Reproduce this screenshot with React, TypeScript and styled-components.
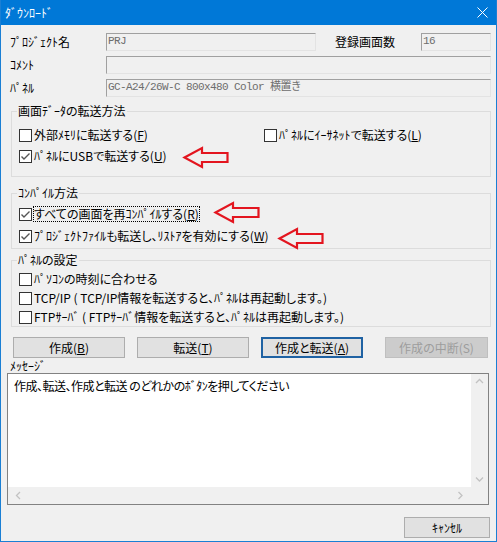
import React from "react";
import styled, { createGlobalStyle, css } from "styled-components";

const UI_FONT = `"Noto Sans CJK JP", "Noto Sans", sans-serif`;
const FIELD_FONT = `"Liberation Mono", "Noto Sans CJK JP", monospace`;

const GlobalStyle = createGlobalStyle`
  html, body { margin: 0; padding: 0; background: #f0f0f0; }
  body {
    font-family: ${UI_FONT};
    font-size: 12px;
    color: #000;
    font-feature-settings: "palt" 1;
  }
  * { box-sizing: border-box; }
`;

const Window = styled.div`
  position: relative;
  width: 497px;
  height: 542px;
  border: 1px solid #1a7fd4;
  border-top: none;
  background: #f0f0f0;
  display: flex;
  flex-direction: column;
  overflow: hidden;
`;

const TitleBar = styled.div`
  height: 25px;
  flex: none;
  background: #0078d7;
  color: #fff;
  display: flex;
  align-items: center;
  justify-content: space-between;
  padding: 0 8px 0 4px;
`;

const Title = styled.span`
  font-size: 12px;
  line-height: 14px;
`;

const Body = styled.div`
  display: flex;
  flex-direction: column;
  padding: 8px 5px 0 6px;
`;

const InfoRow = styled.div`
  display: flex;
  align-items: center;
  height: 18px;
  padding-left: 3px;
  & + & { margin-top: 5px; }
`;

const FieldLabel = styled.span<{ $w: number; $ml?: number }>`
  width: ${(p) => p.$w}px;
  margin-left: ${(p) => p.$ml ?? 0}px;
  flex: none;
  line-height: 14px;
  white-space: nowrap;
`;

const Field = styled.div<{ $w?: number }>`
  height: 18px;
  ${(p) => (p.$w ? css`width: ${p.$w}px; flex: none;` : css`flex: 1;`)}
  border: 1px solid;
  border-color: #a0a0a0 #e3e3e3 #e3e3e3 #a0a0a0;
  background: #f0f0f0;
  color: #6d6d6d;
  font-family: ${FIELD_FONT};
  font-size: 11px;
  letter-spacing: -0.6px;
  line-height: 14px;
  padding: 0 0 0 1px;
  white-space: nowrap;
  overflow: hidden;
  font-feature-settings: normal;
`;

const Group = styled.div<{ $mt: number; $pt: number; $pb: number }>`
  position: relative;
  margin: ${(p) => p.$mt}px 0 0 4px;
  border: 1px solid #dcdcdc;
  padding: ${(p) => p.$pt}px 0 ${(p) => p.$pb}px 7px;
`;

const GroupTitle = styled.span`
  position: absolute;
  top: -8px;
  left: 5px;
  padding: 0 1px;
  background: #f0f0f0;
  line-height: 14px;
  white-space: nowrap;
`;

const CheckGrid = styled.div`
  display: grid;
  grid-template-columns: 245px 1fr;
  grid-auto-rows: 20px;
  row-gap: 1px;
`;

const CheckList = styled.div<{ $gap: number }>`
  display: flex;
  flex-direction: column;
  gap: ${(p) => p.$gap}px;
`;

const CheckRow = styled.div<{ $h: number }>`
  display: flex;
  align-items: center;
  gap: 2px;
  height: ${(p) => p.$h}px;
`;

const Box = styled.span`
  width: 13px;
  height: 13px;
  flex: none;
  border: 1px solid #333;
  background: #fff;
  display: flex;
  align-items: center;
  justify-content: center;
`;

const CheckText = styled.span<{ $focus?: boolean }>`
  line-height: 14px;
  white-space: nowrap;
  ${(p) =>
    p.$focus &&
    css`
      outline: 1px dotted #000;
      outline-offset: 0;
    `}
`;

const Key = styled.span`
  text-decoration: underline;
  text-underline-offset: 1px;
`;

const ButtonRow = styled.div`
  display: flex;
  margin-top: 10px;
  padding-left: 6px;
`;

const Button = styled.div<{ $w: number; $ml?: number; $default?: boolean; $disabled?: boolean }>`
  width: ${(p) => p.$w}px;
  margin-left: ${(p) => p.$ml ?? 0}px;
  height: 21px;
  flex: none;
  display: flex;
  align-items: center;
  justify-content: center;
  background: #e1e1e1;
  border: 1px solid #adadad;
  line-height: 14px;
  white-space: nowrap;
  ${(p) =>
    p.$default &&
    css`
      border-color: #1f62a3;
      box-shadow: inset 0 0 0 1px #1f62a3;
    `}
  ${(p) =>
    p.$disabled &&
    css`
      background: #cccccc;
      border-color: #bfbfbf;
      color: #9d9d9d;
    `}
`;

const MessageLabel = styled.div`
  margin-top: 2px;
  padding-left: 3px;
  line-height: 12px;
  height: 12px;
`;

const MessageBox = styled.div`
  margin-top: 1px;
  width: 482px;
  height: 132px;
  border: 1px solid #828282;
  background: #fff;
  display: grid;
  grid-template-columns: 1fr 17px;
  grid-template-rows: 1fr 17px;
`;

const MessageText = styled.div`
  padding: 5px 6px;
  line-height: 14px;
  letter-spacing: -0.5px;
  white-space: nowrap;
`;

const ScrollV = styled.div`
  background: #f0f0f0;
  display: flex;
  flex-direction: column;
  align-items: center;
  justify-content: space-between;
  padding: 4px 0;
`;

const ScrollH = styled.div`
  background: #f0f0f0;
  display: flex;
  align-items: center;
  justify-content: space-between;
  padding: 0 7px;
`;

const Corner = styled.div`
  background: #f0f0f0;
`;

const Footer = styled.div`
  display: flex;
  justify-content: flex-end;
  margin-top: 12px;
  padding-right: 1px;
`;

const ArrowSvg = styled.svg<{ $x: number; $y: number }>`
  position: absolute;
  left: ${(p) => p.$x}px;
  top: ${(p) => p.$y}px;
  overflow: visible;
`;

const Chevron = ({ dir }: { dir: "up" | "down" | "left" | "right" }) => {
  const pts = {
    up: "1,5 4.5,1.5 8,5",
    down: "1,1.5 4.5,5 8,1.5",
    left: "5,1 1.5,4.5 5,8",
    right: "1.5,1 5,4.5 1.5,8",
  }[dir];
  const vertical = dir === "up" || dir === "down";
  return (
    <svg width={vertical ? 9 : 7} height={vertical ? 7 : 9} viewBox={vertical ? "0 0 9 7" : "0 0 7 9"}>
      <polyline points={pts} fill="none" stroke="#c2c2c2" strokeWidth="1.3" />
    </svg>
  );
};

const RedArrow = ({ x, y }: { x: number; y: number }) => (
  <ArrowSvg $x={x} $y={y} width={46} height={21} viewBox="0 0 46 21">
    <polygon
      points="1.5,10.5 19,1 19,6 44.5,6 44.5,15 19,15 19,20"
      fill="none"
      stroke="#e3151f"
      strokeWidth="2.2"
      strokeLinejoin="miter"
    />
  </ArrowSvg>
);

const CheckBox = ({ checked }: { checked?: boolean }) => (
  <Box>
    {checked && (
      <svg width="11" height="11" viewBox="0 0 11 11">
        <polyline points="1.5,5.5 4,8 9.5,2.5" fill="none" stroke="#555" strokeWidth="1.4" />
      </svg>
    )}
  </Box>
);

const Check = ({
  checked,
  h,
  focus,
  children,
}: {
  checked?: boolean;
  h: number;
  focus?: boolean;
  children: React.ReactNode;
}) => (
  <CheckRow $h={h}>
    <CheckBox checked={checked} />
    <CheckText $focus={focus}>{children}</CheckText>
  </CheckRow>
);

export default function App() {
  return (
    <>
      <GlobalStyle />
      <Window>
        <TitleBar>
          <Title>ﾀﾞｳﾝﾛｰﾄﾞ</Title>
          <svg width="11" height="11" viewBox="0 0 11 11">
            <path d="M0.5 0.5 L10.5 10.5 M10.5 0.5 L0.5 10.5" stroke="#fff" strokeWidth="1" />
          </svg>
        </TitleBar>
        <Body>
          <InfoRow>
            <FieldLabel $w={96}>ﾌﾟﾛｼﾞｪｸﾄ名</FieldLabel>
            <Field $w={210}>PRJ</Field>
            <FieldLabel $w={86} $ml={19}>登録画面数</FieldLabel>
            <Field>16</Field>
          </InfoRow>
          <InfoRow>
            <FieldLabel $w={96}>ｺﾒﾝﾄ</FieldLabel>
            <Field />
          </InfoRow>
          <InfoRow>
            <FieldLabel $w={96}>ﾊﾟﾈﾙ</FieldLabel>
            <Field>GC-A24/26W-C 800x480 Color 横置き</Field>
          </InfoRow>

          <Group $mt={14} $pt={13} $pb={10}>
            <GroupTitle>画面ﾃﾞｰﾀの転送方法</GroupTitle>
            <CheckGrid>
              <Check h={20}>
                外部ﾒﾓﾘに転送する(<Key>F</Key>)
              </Check>
              <Check h={20}>
                ﾊﾟﾈﾙにｲｰｻﾈｯﾄで転送する(<Key>L</Key>)
              </Check>
              <Check h={20} checked>
                ﾊﾟﾈﾙにUSBで転送する(<Key>U</Key>)
              </Check>
            </CheckGrid>
          </Group>

          <Group $mt={16} $pt={10} $pb={2}>
            <GroupTitle>ｺﾝﾊﾟｲﾙ方法</GroupTitle>
            <CheckList $gap={2}>
              <Check h={20} checked focus>
                すべての画面を再ｺﾝﾊﾟｲﾙする(<Key>R</Key>)
              </Check>
              <Check h={20} checked>
                ﾌﾟﾛｼﾞｪｸﾄﾌｧｲﾙも転送し、ﾘｽﾄｱを有効にする(<Key>W</Key>)
              </Check>
            </CheckList>
          </Group>

          <Group $mt={11} $pt={9} $pb={0}>
            <GroupTitle>ﾊﾟﾈﾙの設定</GroupTitle>
            <CheckList $gap={1}>
              <Check h={18}>ﾊﾟｿｺﾝの時刻に合わせる</Check>
              <Check h={18}>TCP/IP ( TCP/IP情報を転送すると、ﾊﾟﾈﾙは再起動します。)</Check>
              <Check h={18}>FTPｻｰﾊﾞ ( FTPｻｰﾊﾞ情報を転送すると、ﾊﾟﾈﾙは再起動します。)</Check>
            </CheckList>
          </Group>

          <ButtonRow>
            <Button $w={112}>
              作成(<Key>B</Key>)
            </Button>
            <Button $w={112} $ml={12}>
              転送(<Key>T</Key>)
            </Button>
            <Button $w={102} $ml={12} $default>
              作成と転送(<Key>A</Key>)
            </Button>
            <Button $w={103} $ml={22} $disabled>
              作成の中断(S)
            </Button>
          </ButtonRow>

          <MessageLabel>ﾒｯｾｰｼﾞ</MessageLabel>
          <MessageBox>
            <MessageText>作成、転送、作成と転送 のどれかのﾎﾞﾀﾝを押してください</MessageText>
            <ScrollV>
              <Chevron dir="up" />
              <Chevron dir="down" />
            </ScrollV>
            <ScrollH>
              <Chevron dir="left" />
              <Chevron dir="right" />
            </ScrollH>
            <Corner />
          </MessageBox>

          <Footer>
            <Button $w={86}>ｷｬﾝｾﾙ</Button>
          </Footer>
        </Body>

        <RedArrow x={182} y={147} />
        <RedArrow x={213} y={202} />
        <RedArrow x={277} y={228} />
      </Window>
    </>
  );
}
